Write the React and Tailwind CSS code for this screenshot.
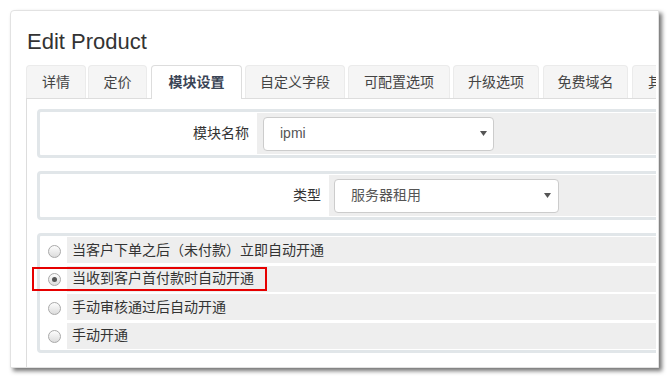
import React from "react";

const tabs = [
  { label: "详情", w: "w-[60px]", ml: "ml-0" },
  { label: "定价", w: "w-[59px]", ml: "ml-[2px]" },
  { label: "模块设置", w: "w-[91px]", ml: "ml-[4px]", active: true },
  { label: "自定义字段", w: "w-[100px]", ml: "ml-[3px]" },
  { label: "可配置选项", w: "w-[102px]", ml: "ml-[3px]" },
  { label: "升级选项", w: "w-[86px]", ml: "ml-[3px]" },
  { label: "免费域名", w: "w-[85px]", ml: "ml-[4px]" },
  { label: "其他", w: "w-[60px]", ml: "ml-[4px]" },
];

const options = [
  "当客户下单之后（未付款）立即自动开通",
  "当收到客户首付款时自动开通",
  "手动审核通过后自动开通",
  "手动开通",
];

function Arrow() {
  return (
    <svg width="7" height="5" viewBox="0 0 7 5" className="shrink-0">
      <path d="M0 0 L7 0 L3.5 5 Z" fill="#555" />
    </svg>
  );
}

function Radio({ checked }) {
  return (
    <span className="w-[13px] h-[13px] rounded-full border border-[#a9a9a9] bg-[linear-gradient(#fdfdfd,#dcdcdc)] flex items-center justify-center">
      {checked && <span className="w-[5px] h-[5px] rounded-full bg-[#555]" />}
    </span>
  );
}

export default function App() {
  return (
    <div className="relative w-[671px] h-[379px] bg-white pt-[10px] pl-[10px] font-['Liberation_Sans','Noto_Sans_CJK_SC',sans-serif] text-[14px] text-[#333]">
      <div className="w-[649px] h-[358px] bg-white border border-[#e2e2e2] rounded-tl-[4px] shadow-[3px_3px_4px_rgba(0,0,0,0.55)] flex flex-col">
        <div className="flex-1 mr-[2px] overflow-hidden flex flex-col pt-[19px] pl-[15px]">
          <h1 className="text-[22px] leading-[24px] text-[#333] font-normal pl-[1px]">Edit Product</h1>
          <div className="mt-[11px] flex items-start h-[34px] border-b border-[#dddddd] shrink-0">
            {tabs.map((t) => (
              <div
                key={t.label}
                className={`${t.w} ${t.ml} shrink-0 flex items-center justify-center rounded-t-[4px] border border-b-0 text-[14px] ${
                  t.active
                    ? "h-[34px] bg-white border-[#dddddd] font-bold text-[#3a4455]"
                    : "h-[33px] bg-[#f5f5f5] border-[#ebebeb] text-[#444]"
                }`}
              >
                {t.label}
              </div>
            ))}
          </div>
          <div className="flex-1 border-l border-[#dddddd] pt-[10px] pl-[10px] flex flex-col gap-[13px]">
            {/* Panel 1 */}
            <div className="w-[660px] shrink-0 border-[3px] border-[#e1e6e9] rounded-[4px] p-[1px]">
              <div className="flex h-[41px]">
                <div className="w-[216px] shrink-0 flex items-center justify-end pr-[8px]">模块名称</div>
                <div className="flex-1 bg-[#eeeeee] flex items-center pl-[6px]">
                  <div className="w-[231px] h-[34px] bg-white border border-[#cccccc] rounded-[4px] flex items-center pl-[16px] pr-[6px] text-[#555]">
                    <span>ipmi</span>
                    <span className="ml-auto"><Arrow /></span>
                  </div>
                </div>
              </div>
            </div>
            {/* Panel 2 */}
            <div className="w-[660px] shrink-0 border-[3px] border-[#e1e6e9] rounded-[4px] p-[1px]">
              <div className="flex h-[41px]">
                <div className="w-[288px] shrink-0 flex items-center justify-end pr-[8px]">类型</div>
                <div className="flex-1 bg-[#eeeeee] flex items-center pl-[5px]">
                  <div className="w-[225px] h-[34px] bg-white border border-[#cccccc] rounded-[4px] flex items-center pl-[16px] pr-[7px] text-[#555]">
                    <span>服务器租用</span>
                    <span className="ml-auto"><Arrow /></span>
                  </div>
                </div>
              </div>
            </div>
            {/* Panel 3 */}
            <div className="w-[660px] shrink-0 border-[3px] border-[#e1e6e9] rounded-[4px] p-[1px] flex flex-col gap-[2.5px]">
              {options.map((o, i) => (
                <div key={o} className="flex h-[26px]">
                  <div className="w-[26px] shrink-0 flex items-center justify-center pt-[2px]">
                    <Radio checked={i === 1} />
                  </div>
                  <div className="flex-1 bg-[#eeeeee] flex items-center pl-[5px] text-[#333]">{o}</div>
                </div>
              ))}
            </div>
          </div>
        </div>
      </div>
      <div className="absolute left-[32px] top-[267px] w-[235px] h-[24px] border-2 border-[#e60000]" />
    </div>
  );
}
